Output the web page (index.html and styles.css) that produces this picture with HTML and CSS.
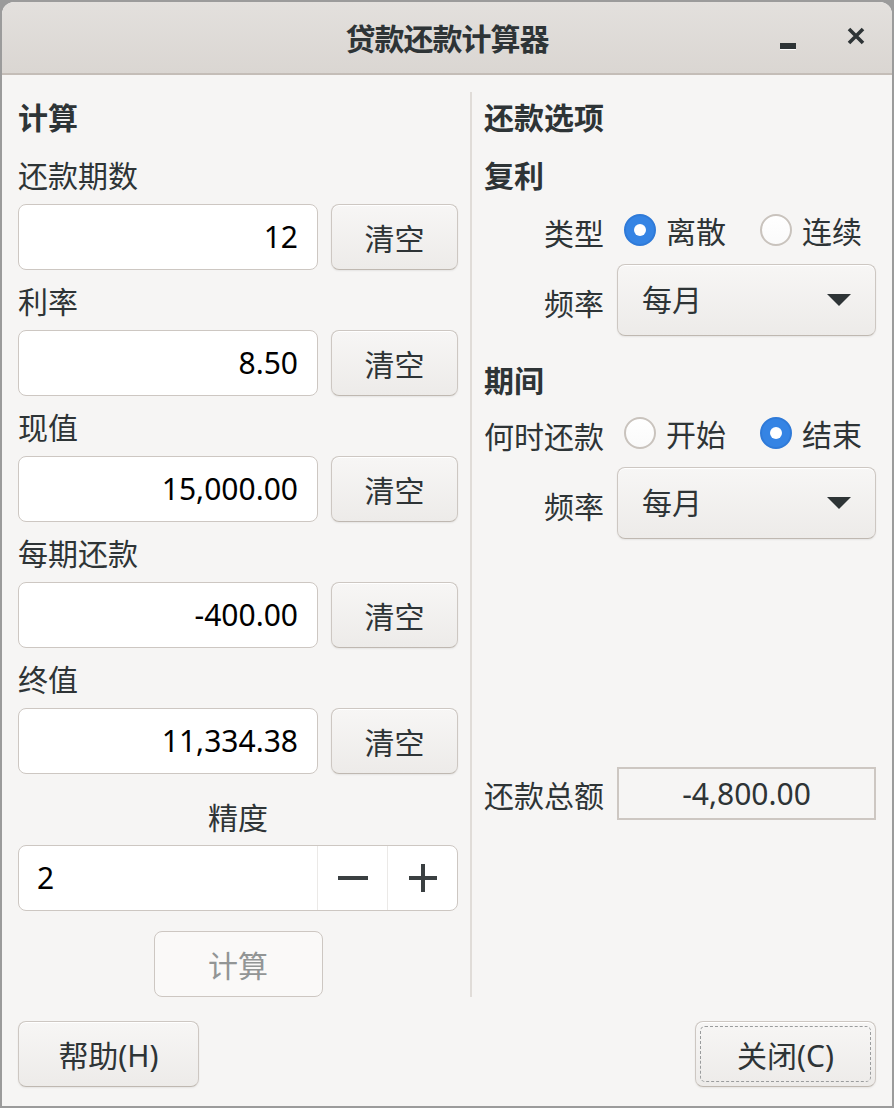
FILE: index.html
```html
<!DOCTYPE html>
<html lang="zh-CN">
<head>
<meta charset="utf-8">
<title>贷款还款计算器</title>
<link rel="stylesheet" href="styles.css">
</head>
<body>
<div class="window">
  <header class="titlebar">
    <div class="title">贷款还款计算器</div>
    <div class="tb-buttons">
      <span class="tb-min"></span>
      <svg class="tb-close" width="18" height="18" viewBox="0 0 18 18"><path d="M2 2 L16 16 M16 2 L2 16" stroke="#2e3436" stroke-width="3.6" stroke-linecap="butt"/></svg>
    </div>
  </header>
  <main class="content">
    <div class="columns">
      <section class="col-left">
        <div class="heading">计算</div>
        <div class="label">还款期数</div>
        <div class="entry-row"><div class="entry">12</div><button class="btn clear">清空</button></div>
        <div class="label">利率</div>
        <div class="entry-row"><div class="entry">8.50</div><button class="btn clear">清空</button></div>
        <div class="label">现值</div>
        <div class="entry-row"><div class="entry">15,000.00</div><button class="btn clear">清空</button></div>
        <div class="label">每期还款</div>
        <div class="entry-row"><div class="entry">-400.00</div><button class="btn clear">清空</button></div>
        <div class="label">终值</div>
        <div class="entry-row"><div class="entry">11,334.38</div><button class="btn clear">清空</button></div>
        <div class="label precision">精度</div>
        <div class="spin">
          <div class="spin-value">2</div>
          <div class="spin-btn"><svg width="30" height="30" viewBox="0 0 30 30"><rect x="0" y="13" width="30" height="4" fill="#3a3f41"/></svg></div>
          <div class="spin-btn"><svg width="30" height="30" viewBox="0 0 30 30"><rect x="1" y="13" width="28" height="4" fill="#3a3f41"/><rect x="13" y="1" width="4" height="28" fill="#3a3f41"/></svg></div>
        </div>
        <button class="btn calc" disabled>计算</button>
      </section>
      <div class="separator"></div>
      <section class="col-right">
        <div class="heading">还款选项</div>
        <div class="heading sub">复利</div>
        <div class="form-row radio-row first">
          <div class="row-label">类型</div>
          <div class="radios">
            <span class="radio checked"></span><span class="radio-text">离散</span>
            <span class="radio second"></span><span class="radio-text">连续</span>
          </div>
        </div>
        <div class="form-row combo-row">
          <div class="row-label">频率</div>
          <div class="combo"><span>每月</span><svg width="24" height="12" viewBox="0 0 24 12"><path d="M0 0 H24 L12 12 Z" fill="#2e3436"/></svg></div>
        </div>
        <div class="heading period">期间</div>
        <div class="form-row radio-row">
          <div class="row-label">何时还款</div>
          <div class="radios">
            <span class="radio"></span><span class="radio-text">开始</span>
            <span class="radio checked second"></span><span class="radio-text">结束</span>
          </div>
        </div>
        <div class="form-row combo-row">
          <div class="row-label">频率</div>
          <div class="combo"><span>每月</span><svg width="24" height="12" viewBox="0 0 24 12"><path d="M0 0 H24 L12 12 Z" fill="#2e3436"/></svg></div>
        </div>
        <div class="form-row total-row">
          <div class="row-label">还款总额</div>
          <div class="total">-4,800.00</div>
        </div>
      </section>
    </div>
    <div class="actions">
      <button class="btn action">帮助(H)</button>
      <button class="btn action focused"><span class="focus-ring">关闭(C)</span></button>
    </div>
  </main>
</div>
</body>
</html>
```

FILE: styles.css
```css
* { box-sizing: border-box; }
html, body { margin: 0; padding: 0; background: #9b9b9b; }
body {
  font-family: "Noto Sans", "Noto Sans CJK SC", sans-serif;
  font-size: 30px;
  color: #2e3436;
}
.window {
  width: 894px;
  height: 1108px;
  border: 2px solid #9b9b9b;
  border-radius: 14px 14px 0 0;
  background: #f6f5f4;
  overflow: hidden;
  display: flex;
  flex-direction: column;
}
.titlebar {
  height: 73px;
  flex: none;
  position: relative;
  background: linear-gradient(#e3e0dd, #dad6d2);
  border-bottom: 2px solid #c4bdb7;
  border-radius: 12px 12px 0 0;
  display: flex;
  align-items: center;
  justify-content: center;
}
.title {
  font-weight: bold;
  font-size: 30px;
  line-height: 40px;
  margin-top: 2px;
  letter-spacing: -1px;
}
.tb-buttons {
  position: absolute;
  right: 0;
  top: 0;
  height: 71px;
  display: flex;
  align-items: center;
}
.tb-min {
  width: 16px;
  height: 6px;
  background: #2e3436;
  margin-top: 17px;
  box-shadow: 0 1px 0 #fff;
}
.tb-close {
  margin-left: 51px;
  margin-right: 27px;
  margin-top: -4px;
}
.content {
  flex: 1;
  padding: 17px 16px 0;
  display: flex;
  flex-direction: column;
}
.columns {
  display: flex;
}
.col-left {
  width: 440px;
  padding-top: 6px;
  display: flex;
  flex-direction: column;
}
.separator {
  width: 2px;
  background: #e0dcd8;
  margin: 0 12px;
}
.col-right {
  width: 392px;
  padding-top: 6px;
  display: flex;
  flex-direction: column;
}
.heading {
  font-weight: bold;
  line-height: 40px;
  height: 40px;
}
.heading.sub { margin-top: 18px; }
.heading.period { margin-top: 25px; }
.label {
  line-height: 40px;
  height: 40px;
  margin-top: 18px;
}
.entry-row + .label { margin-top: 12px; }
.label.precision {
  text-align: center;
  margin-top: 24px;
}
.entry-row {
  display: flex;
  margin-top: 8px;
  height: 66px;
}
.entry {
  flex: 1;
  background: #fff;
  border: 1px solid #cdc7c2;
  border-radius: 8px;
  color: #000;
  text-align: right;
  padding-right: 19px;
  line-height: 64px;
}
.btn {
  font-family: inherit;
  font-size: 30px;
  color: #2e3436;
  background: linear-gradient(#f7f6f5, #edebe9);
  border: 1px solid #cdc7c2;
  border-bottom-color: #bfb8b1;
  border-radius: 8px;
  box-shadow: inset 0 1px #fff, 0 1px 2px rgba(0,0,0,0.07);
  padding: 0;
}
.clear {
  width: 127px;
  margin-left: 13px;
}
.spin {
  margin-top: 7px;
  height: 66px;
  display: flex;
  background: #fff;
  border: 1px solid #cdc7c2;
  border-radius: 8px;
}
.spin-value {
  flex: 1;
  color: #000;
  padding-left: 18px;
  line-height: 64px;
}
.spin-btn {
  width: 70px;
  border-left: 1px solid #ebe9e7;
  display: flex;
  align-items: center;
  justify-content: center;
}
.calc {
  align-self: center;
  margin-top: 20px;
  width: 169px;
  height: 66px;
  background: #faf9f8;
  border-color: #cdc7c2;
  box-shadow: none;
  color: #929595;
}
.form-row {
  display: flex;
  align-items: center;
}
.row-label {
  width: 120px;
  text-align: right;
  margin-right: 13px;
  flex: none;
}
.radio-row { height: 48px; margin-top: 10px; }
.radio-row.first { margin-top: 12px; }
.radios {
  display: flex;
  align-items: center;
}
.radio {
  width: 32px;
  height: 32px;
  border-radius: 50%;
  background: linear-gradient(#fff, #fafafa);
  border: 2px solid #c9c3bd;
  margin-left: 7px;
  margin-right: 10px;
  margin-top: -4px;
  flex: none;
  position: relative;
}
.radio.second { margin-left: 34px; }
.radio.checked {
  background: #3584e4;
  border-color: #2f7ad8;
}
.radio.checked::after {
  content: "";
  position: absolute;
  left: 50%;
  top: 50%;
  width: 12px;
  height: 12px;
  margin: -6px 0 0 -6px;
  border-radius: 50%;
  background: #fff;
}
.radio-text { line-height: 40px; }
.combo-row { margin-top: 7px; }
.combo-row .row-label { margin-top: 4px; }
.radio-row + .combo-row { margin-top: 8px; }
.combo {
  flex: 1;
  height: 72px;
  display: flex;
  align-items: center;
  justify-content: space-between;
  padding: 0 24px;
  background: linear-gradient(#f7f6f5, #edebe9);
  border: 1px solid #cdc7c2;
  border-bottom-color: #bfb8b1;
  border-radius: 8px;
  box-shadow: inset 0 1px #fff, 0 1px 2px rgba(0,0,0,0.07);
}
.combo span { line-height: 40px; }
.total-row {
  margin-top: 228px;
}
.total {
  flex: 1;
  height: 53px;
  border: 2px solid #cdc7c2;
  text-align: center;
  line-height: 49px;
}
.actions {
  display: flex;
  justify-content: space-between;
  margin-top: 24px;
}
.action {
  width: 181px;
  height: 66px;
}
.focused {
  padding: 4px;
}
.focus-ring {
  display: flex;
  align-items: center;
  justify-content: center;
  height: 100%;
  border: 1px dashed #9a9c9d;
  border-radius: 5px;
}
```
